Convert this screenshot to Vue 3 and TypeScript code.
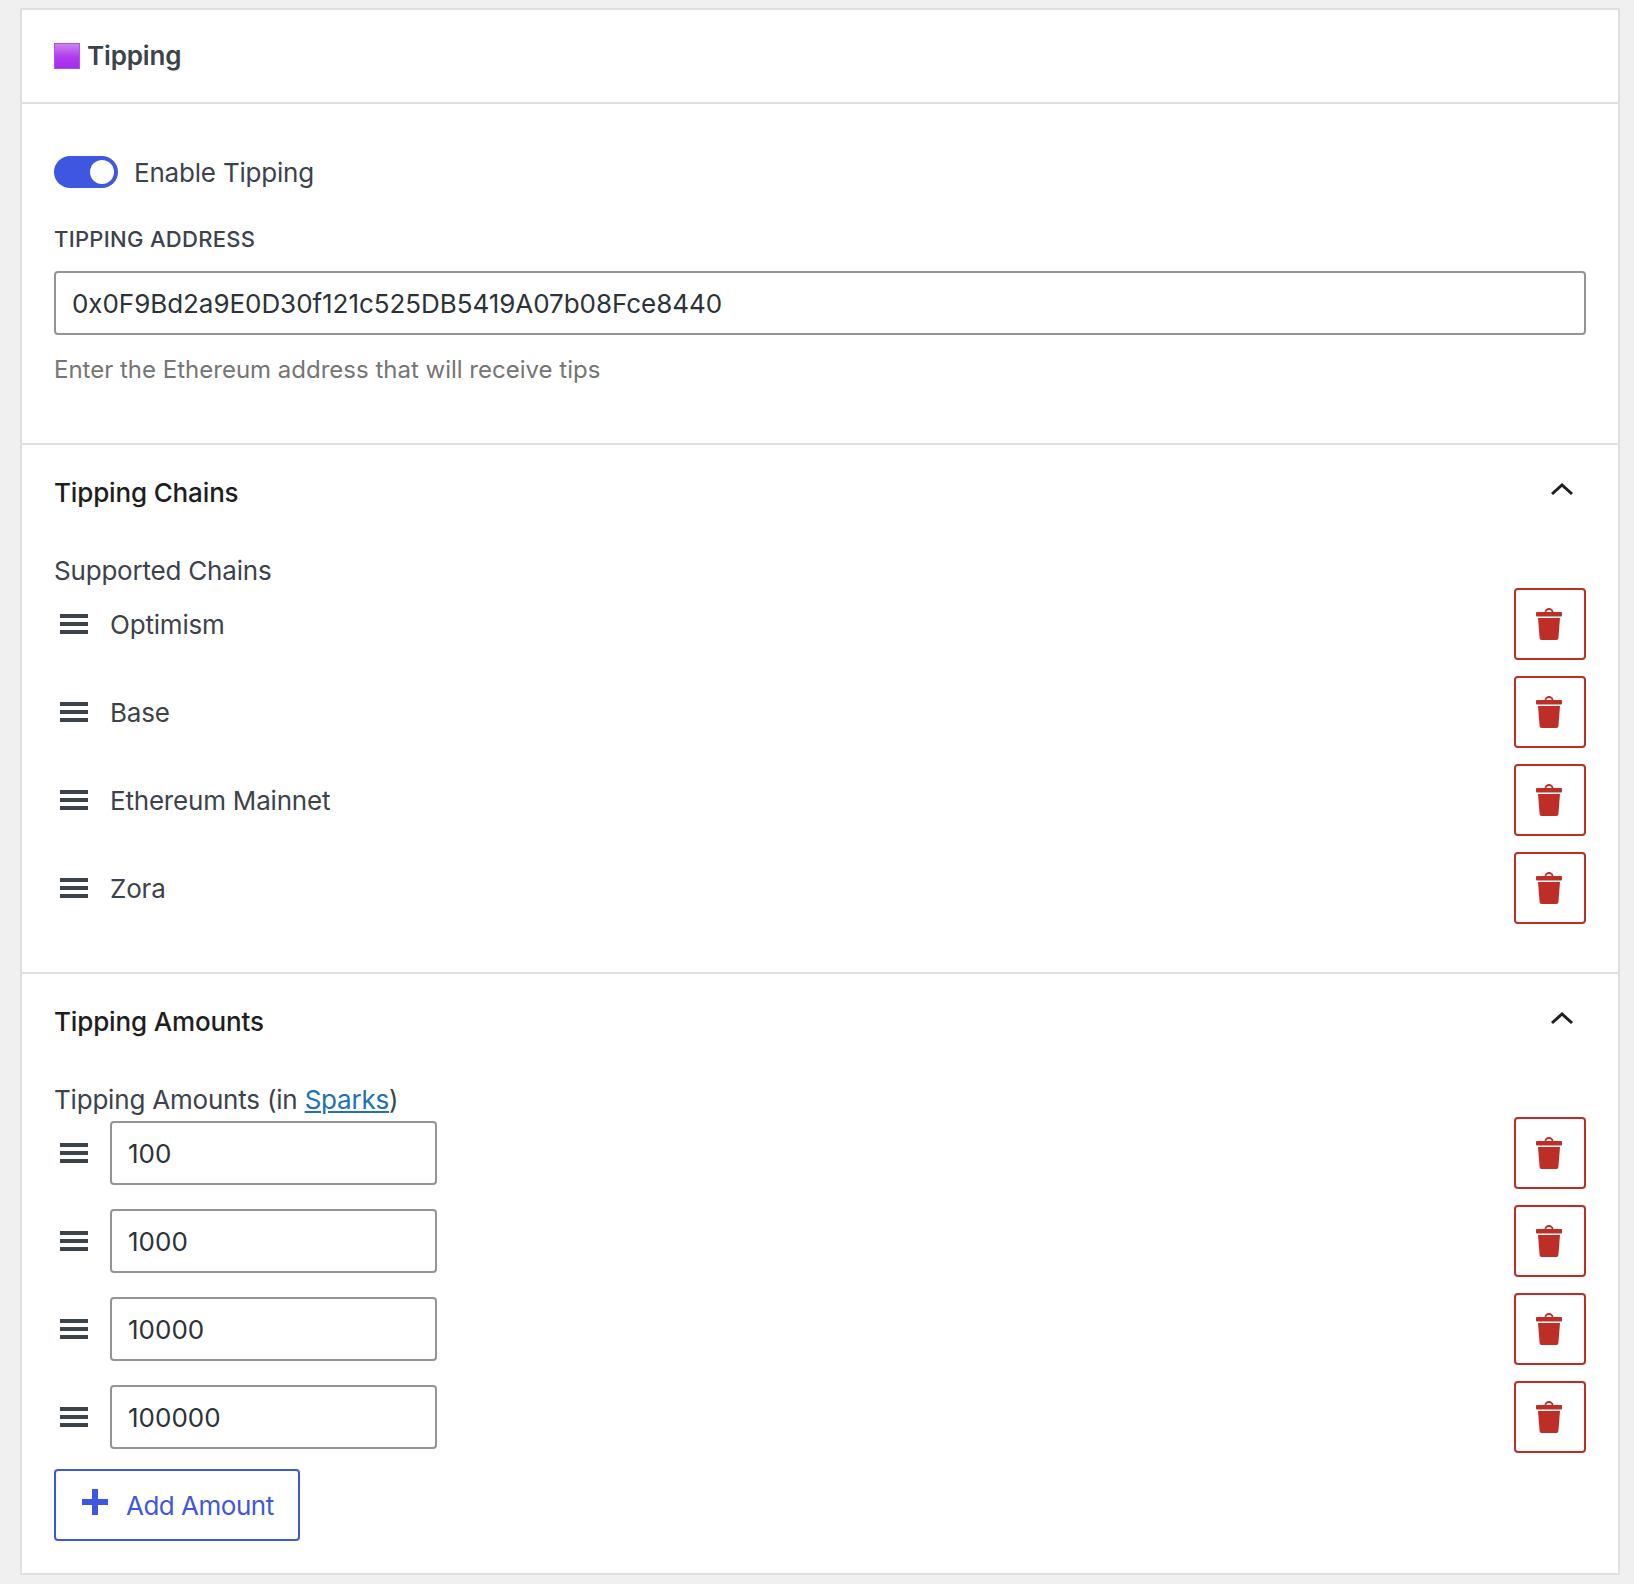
<template>
  <div class="page">
    <div class="card">
      <header class="card-head">
        <span class="emoji" />
        <h2 class="card-title">Tipping</h2>
      </header>

      <section class="panel panel-main">
        <div class="toggle-row">
          <span class="toggle"><span class="toggle-knob" /></span>
          <span class="toggle-label">Enable Tipping</span>
        </div>
        <label class="field-label">TIPPING ADDRESS</label>
        <input class="text-input address" type="text" readonly :value="address" />
        <p class="help">Enter the Ethereum address that will receive tips</p>
      </section>

      <section class="panel">
        <div class="panel-head">
          <h3 class="panel-title">Tipping Chains</h3>
          <svg class="chevron" width="24" height="14" viewBox="0 0 24 14" fill="none">
            <path d="M2 12 L12 3 L22 12" stroke="#1e1e1e" stroke-width="3" />
          </svg>
        </div>
        <div class="list-label">Supported Chains</div>
        <div v-for="chain in chains" :key="chain" class="row">
          <span class="handle"><i /><i /><i /></span>
          <span class="row-text">{{ chain }}</span>
          <button class="trash" type="button" aria-label="Remove">
            <svg width="26" height="32" viewBox="0 0 26 32">
              <path d="M8.5 4.5 C8.5 -1.5 17.5 -1.5 17.5 4.5 L15.8 4.5 C15.8 1.2 10.2 1.2 10.2 4.5 Z" fill="#bd2e26" />
              <rect x="0" y="4" width="26" height="4.5" rx="1" fill="#bd2e26" />
              <path d="M2 10 H24 L22.4 30 C22.3 31.3 21.5 32 20.4 32 H5.6 C4.5 32 3.7 31.3 3.6 30 Z" fill="#bd2e26" />
            </svg>
          </button>
        </div>
      </section>

      <section class="panel panel-last">
        <div class="panel-head">
          <h3 class="panel-title">Tipping Amounts</h3>
          <svg class="chevron" width="24" height="14" viewBox="0 0 24 14" fill="none">
            <path d="M2 12 L12 3 L22 12" stroke="#1e1e1e" stroke-width="3" />
          </svg>
        </div>
        <div class="list-label">Tipping Amounts (in <a class="link" href="#">Sparks</a>)</div>
        <div v-for="amount in amounts" :key="amount" class="row">
          <span class="handle"><i /><i /><i /></span>
          <input class="text-input amount" type="text" readonly :value="amount" />
          <button class="trash" type="button" aria-label="Remove">
            <svg width="26" height="32" viewBox="0 0 26 32">
              <path d="M8.5 4.5 C8.5 -1.5 17.5 -1.5 17.5 4.5 L15.8 4.5 C15.8 1.2 10.2 1.2 10.2 4.5 Z" fill="#bd2e26" />
              <rect x="0" y="4" width="26" height="4.5" rx="1" fill="#bd2e26" />
              <path d="M2 10 H24 L22.4 30 C22.3 31.3 21.5 32 20.4 32 H5.6 C4.5 32 3.7 31.3 3.6 30 Z" fill="#bd2e26" />
            </svg>
          </button>
        </div>
        <button class="add" type="button">
          <svg width="26" height="26" viewBox="0 0 26 26">
            <path d="M10 0 H16 V10 H26 V16 H16 V26 H10 V16 H0 V10 H10 Z" fill="#3f57e0" />
          </svg>
          <span>Add Amount</span>
        </button>
      </section>
    </div>
  </div>
</template>

<script setup lang="ts">
const address = '0x0F9Bd2a9E0D30f121c525DB5419A07b08Fce8440'
const chains: string[] = ['Optimism', 'Base', 'Ethereum Mainnet', 'Zora']
const amounts: string[] = ['100', '1000', '10000', '100000']
</script>

<style>
html,
body {
  background: #f0f0f1;
}
</style>

<style scoped>
.page {
  box-sizing: border-box;
  min-height: 1584px;
  padding: 8px 14px 0 20px;
  background: #f0f0f1;
  font-family: Inter, "Liberation Sans", sans-serif;
  color: #3c434a;
  font-size: 26px;
  letter-spacing: -0.2px;
}

.card {
  background: #fff;
  border: 2px solid #e0e0e0;
}

.card-head {
  display: flex;
  align-items: center;
  height: 92px;
  padding: 0 32px;
  border-bottom: 2px solid #e0e0e0;
}

.emoji {
  width: 26px;
  height: 26px;
  margin-right: 7px;
  background: linear-gradient(#cb85ee, #ae3bee 55%, #a62cf0);
  border: 1px solid #b44ef0;
  box-sizing: border-box;
}

.card-title {
  margin: 0;
  font-size: 26px;
  font-weight: 600;
  line-height: 36px;
  letter-spacing: -0.15px;
}

.panel {
  padding: 32px;
  border-bottom: 2px solid #e0e0e0;
}

.panel-last {
  border-bottom: 0;
}

.panel-main {
  height: 341px;
  box-sizing: border-box;
  padding-top: 52px;
}

.toggle-row {
  display: flex;
  align-items: center;
  height: 32px;
}

.toggle {
  box-sizing: border-box;
  display: flex;
  justify-content: flex-end;
  align-items: center;
  width: 64px;
  height: 32px;
  padding-right: 4px;
  border-radius: 16px;
  background: #3f57e0;
}

.toggle-knob {
  width: 24px;
  height: 24px;
  border-radius: 50%;
  background: #fff;
}

.toggle-label {
  margin-left: 16px;
}

.field-label {
  display: block;
  margin-top: 35px;
  font-size: 22px;
  font-weight: 500;
  line-height: 32px;
  letter-spacing: 0.3px;
}

.text-input {
  box-sizing: border-box;
  height: 64px;
  padding: 0 16px;
  border: 2px solid #949494;
  border-radius: 4px;
  background: #fff;
  color: #2c3338;
  font: inherit;
  outline: none;
}

.address {
  display: block;
  width: 100%;
  margin-top: 16px;
  letter-spacing: -0.05px;
}

.help {
  margin: 18px 0 0;
  font-size: 24px;
  line-height: 34px;
  letter-spacing: 0;
  color: #757575;
}

.panel-head {
  display: flex;
  justify-content: space-between;
  align-items: center;
  height: 36px;
  margin-top: -2px;
  padding-right: 12px;
}

.panel-title {
  margin: 0;
  font-size: 26px;
  font-weight: 500;
  line-height: 36px;
  letter-spacing: -0.15px;
  color: #1e1e1e;
}

.chevron {
  margin-top: -8px;
}

.list-label {
  margin-top: 42px;
  height: 35px;
  line-height: 36px;
}

.link {
  color: #2271b1;
}

.row {
  display: flex;
  align-items: center;
  height: 72px;
  margin-bottom: 16px;
}

.handle {
  display: flex;
  flex-direction: column;
  gap: 4px;
  width: 28px;
  margin: 0 22px 0 6px;
}

.handle i {
  display: block;
  height: 4px;
  background: #3c434a;
}

.amount {
  width: 327px;
}

.trash {
  display: flex;
  align-items: center;
  justify-content: center;
  box-sizing: border-box;
  width: 72px;
  height: 72px;
  margin-left: auto;
  padding: 0 2px 0 0;
  border: 2px solid #bd2e26;
  border-radius: 4px;
  background: #fff;
}

.add {
  display: flex;
  align-items: center;
  box-sizing: border-box;
  width: 246px;
  height: 72px;
  padding: 0 0 0 26px;
  border: 2px solid #3f57e0;
  border-radius: 4px;
  background: #fff;
  color: #3f57e0;
  font: inherit;
  letter-spacing: -0.5px;
}

.add svg {
  margin: -6px 18px 0 0;
}
</style>
